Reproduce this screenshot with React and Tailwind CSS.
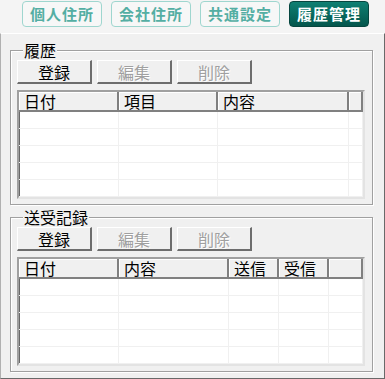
import React from "react";

const tabs = ["個人住所", "会社住所", "共通設定", "履歴管理"];

function Button({ label, disabled }) {
  return (
    <button
      className={
        "w-[75px] h-[24px] bg-[#f0f0f0] border-t border-l border-t-white border-l-white border-r-2 border-b-2 border-r-[#6d6d6d] border-b-[#6d6d6d] text-[16px] leading-[16px] " +
        (disabled ? "text-[#a0a0a0] [text-shadow:1px_1px_0_#ffffff]" : "text-black")
      }
    >
      {label}
    </button>
  );
}

function Table({ columns }) {
  const rows = [0, 1, 2, 3, 4];
  return (
    <div className="mt-[6px] w-[348px] h-[109px] border-t-2 border-l-2 border-t-[#a0a0a0] border-l-[#a0a0a0] border-r-2 border-b-2 border-r-[#e3e3e3] border-b-[#e3e3e3] shadow-[inset_1px_1px_0_#696969] bg-white overflow-hidden">
      <div className="flex h-[20px] bg-[#f0f0f0]">
        {columns.map((c, i) => (
          <div
            key={i}
            className={
              "h-[20px] border-r-2 border-b-2 border-r-[#808080] border-b-[#808080] shadow-[inset_1px_1px_0_#ffffff] pl-[5px] text-[16px] leading-[18px] text-black whitespace-nowrap " +
              (i === columns.length - 1 ? "flex-1 border-r-0" : "")
            }
            style={i === columns.length - 1 ? undefined : { width: c.w }}
          >
            {c.label}
          </div>
        ))}
      </div>
      {rows.map((r) => (
        <div key={r} className="flex h-[17px] border-b border-b-[#f0f0f0]">
          {columns.map((c, i) => (
            <div
              key={i}
              className={
                "h-full border-r border-r-[#f0f0f0] " +
                (i === columns.length - 1 ? "flex-1" : "")
              }
              style={i === columns.length - 1 ? undefined : { width: c.w }}
            />
          ))}
        </div>
      ))}
    </div>
  );
}

function Group({ title, columns, className }) {
  return (
    <fieldset
      className={
        "w-[363px] border border-[#a0a0a0] shadow-[inset_1px_1px_0_#ffffff,1px_1px_0_#ffffff] pl-[6px] pb-[5px] " +
        (className || "")
      }
    >
      <legend className="ml-[6px] px-[1px] text-[16px] leading-[16px] text-black bg-[#f0f0f0]">
        {title}
      </legend>
      <div className="flex gap-[5px] mt-[2px]">
        <Button label="登録" />
        <Button label="編集" disabled />
        <Button label="削除" disabled />
      </div>
      <Table columns={columns} />
    </fieldset>
  );
}

export default function App() {
  return (
    <div
      className="w-[385px] h-[379px] bg-[#f0f0f0] overflow-hidden"
      style={{ fontFamily: '"Noto Sans CJK JP", "Noto Sans", sans-serif' }}
    >
      {/* Tabs */}
      <div className="h-[33px] flex gap-[9px] pl-[22px] pt-[1px] bg-[#f4f4f4]">
        {tabs.map((t, i) => (
          <div
            key={t}
            className={
              "w-[80px] h-[26px] rounded-[4px] border flex items-center justify-center text-[15px] font-bold tracking-[1px] " +
              (i === 3
                ? "bg-gradient-to-b from-[#0f8073] to-[#04564c] border-[#06463f] text-white"
                : "bg-[#f7f7f7] border-[#9fd6cf] text-[#54aea3]")
            }
          >
            {t}
          </div>
        ))}
      </div>

      {/* Panel */}
      <div className="h-[346px] border-t border-l border-t-white border-l-[#b0b0b0] border-r border-b border-r-[#696969] border-b-[#696969] pl-[9px] pt-[8px]">
        <Group
          title="履歴"
          columns={[
            { label: "日付", w: 100 },
            { label: "項目", w: 99 },
            { label: "内容", w: 131 },
            { label: "", w: 0 },
          ]}
        />
        <Group
          title="送受記録"
          className="mt-[4px]"
          columns={[
            { label: "日付", w: 100 },
            { label: "内容", w: 110 },
            { label: "送信", w: 50 },
            { label: "受信", w: 50 },
            { label: "", w: 0 },
          ]}
        />
      </div>
    </div>
  );
}
